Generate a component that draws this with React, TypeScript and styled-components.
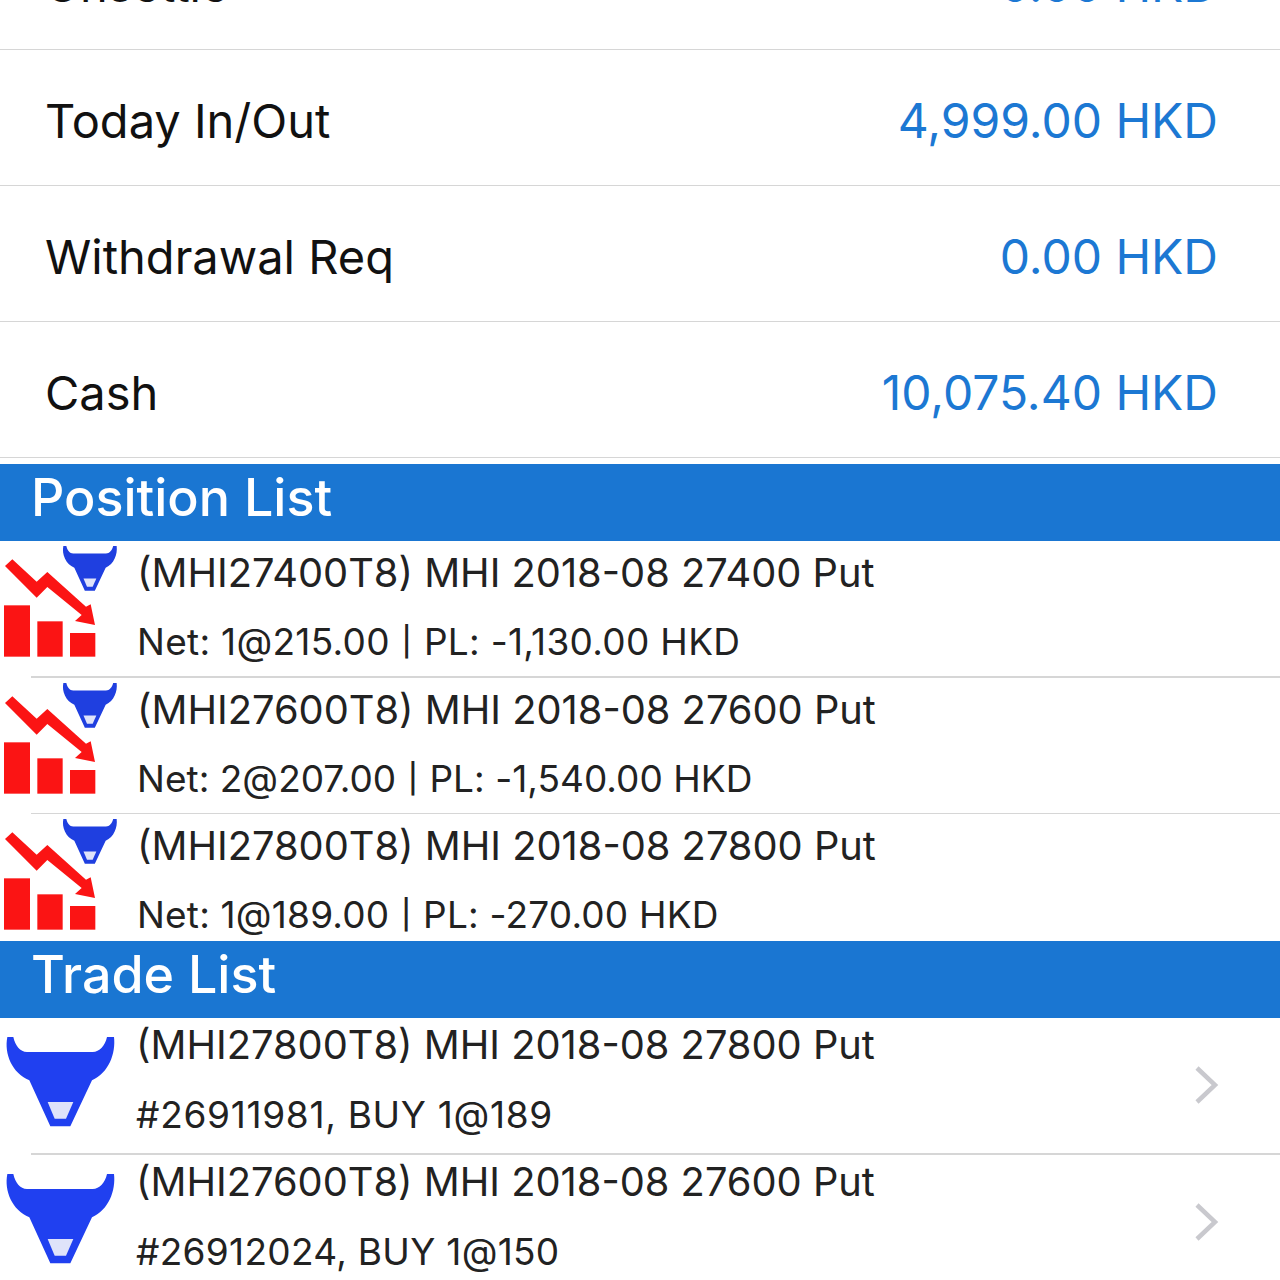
import React from 'react'
import styled, { createGlobalStyle } from 'styled-components'

const GlobalStyle = createGlobalStyle`
    html, body {
        margin: 0;
        padding: 0;
        height: 1280px;
        overflow: hidden;
        background: #fff;
        font-family: Inter, "Liberation Sans", sans-serif;
    }
`

const Screen = styled.div`
    width: 1280px;
    height: 1280px;
    overflow: hidden;
`

const Page = styled.div`
    display: flex;
    flex-direction: column;
    margin-top: -86px;
`

const SummaryRow = styled.div`
    display: flex;
    align-items: center;
    justify-content: space-between;
    box-sizing: border-box;
    height: 136px;
    padding: 5px 62px 0 45px;
    border-bottom: 1.5px solid #d6d6d6;
`

const SummaryLabel = styled.div`
    font-size: 47px;
    color: #111;
`

const SummaryValue = styled.div`
    font-size: 48px;
    color: #1c78d3;
`

const SectionHeader = styled.div`
    display: flex;
    align-items: center;
    box-sizing: border-box;
    height: 77px;
    padding: 0 0 10px 31px;
    background: #1a76d2;
    color: #fff;
    font-size: 52px;
    font-weight: 500;
`

const PositionHeader = styled(SectionHeader)`
    margin-top: 6px;
`

const ListRow = styled.div<{ $short?: boolean }>`
    display: flex;
    align-items: flex-start;
    height: ${p => (p.$short ? '127px' : '135px')};
    overflow: hidden;
`

const IconCell = styled.div`
    flex: 0 0 137px;
    display: flex;
`

const RowBody = styled.div<{ $trade?: boolean }>`
    flex: 1;
    display: flex;
    flex-direction: column;
    gap: ${p => (p.$trade ? '22px' : '21px')};
    padding-top: ${p => (p.$trade ? '3px' : '8px')};
    margin-left: ${p => (p.$trade ? '-1px' : '0')};
`

const RowTitle = styled.div`
    font-size: 39.8px;
    line-height: 48px;
    color: #222;
    white-space: nowrap;
`

const RowDetail = styled.div<{ $tracking: number }>`
    font-size: 37px;
    line-height: 48px;
    color: #222;
    white-space: nowrap;
    letter-spacing: ${p => p.$tracking}px;
`

const Pipe = styled.span`
    display: inline-block;
    transform: scaleY(0.78);
`

const Separator = styled.div`
    height: 1.5px;
    margin-left: 31px;
    background: #d6d6d6;
`

const Chevron = styled.svg`
    flex: 0 0 auto;
    width: 26px;
    height: 42px;
    margin: 46px 61px 0 0;
`

const BULL = 'M6 0 L24 0 C30 26 44 45 65 45 L262 45 C283 45 299 26 305 0 L326 0 C332 50 310 108 260 130 L195 268 L135 268 L72 130 C20 108 -4 50 6 0 Z'
const SNOUT = 'M127 195 L204 195 L182 245 L148 245 Z'

const PositionIcon = () => (
    <svg width="120" height="120" viewBox="0 0 360 360">
        <path d="M15 75 L37 55 L110 122 L142 93 L258 197 L272 190 L285 252 L225 240 L245 222 L142 138 L110 170 Z" fill="#fb1414" />
        <rect x="12" y="193" width="78" height="154" fill="#fb1414" />
        <rect x="112" y="241" width="76" height="106" fill="#fb1414" />
        <rect x="210" y="276" width="76" height="71" fill="#fb1414" />
        <g transform="translate(187 15) scale(0.5)">
            <path d={BULL} fill="#1f3fe0" />
            <path d={SNOUT} fill="#dfe3fa" />
        </g>
    </svg>
)

const TradeIcon = () => (
    <svg width="120" height="120" viewBox="0 0 360 360">
        <g transform="translate(16 57)">
            <path d={BULL} fill="#2040f0" />
            <path d={SNOUT} fill="#dfe3fa" />
        </g>
    </svg>
)

const summary = [
    { label: 'Unsettle', value: '0.00 HKD' },
    { label: 'Today In/Out', value: '4,999.00 HKD' },
    { label: 'Withdrawal Req', value: '0.00 HKD' },
    { label: 'Cash', value: '10,075.40 HKD' },
]

const positions = [
    { title: '(MHI27400T8) MHI 2018-08 27400 Put', net: 'Net: 1@215.00', pl: 'PL: -1,130.00 HKD', tracking: 0.3 },
    { title: '(MHI27600T8) MHI 2018-08 27600 Put', net: 'Net: 2@207.00', pl: 'PL: -1,540.00 HKD', tracking: 0.03 },
    { title: '(MHI27800T8) MHI 2018-08 27800 Put', net: 'Net: 1@189.00', pl: 'PL: -270.00 HKD', tracking: 0.2 },
]

const trades = [
    { title: '(MHI27800T8) MHI 2018-08 27800 Put', detail: '#26911981, BUY 1@189', tracking: 0.7 },
    { title: '(MHI27600T8) MHI 2018-08 27600 Put', detail: '#26912024, BUY 1@150', tracking: 0.3 },
]

const App = () => {
    return (
        <Screen>
            <GlobalStyle />
            <Page>
                {summary.map(row => (
                    <SummaryRow key={row.label}>
                        <SummaryLabel>{row.label}</SummaryLabel>
                        <SummaryValue>{row.value}</SummaryValue>
                    </SummaryRow>
                ))}
                <PositionHeader>Position List</PositionHeader>
                {positions.map((row, i) => (
                    <React.Fragment key={row.title}>
                        <ListRow $short={i === positions.length - 1}>
                            <IconCell><PositionIcon /></IconCell>
                            <RowBody>
                                <RowTitle>{row.title}</RowTitle>
                                <RowDetail $tracking={row.tracking}>{row.net} <Pipe>|</Pipe> {row.pl}</RowDetail>
                            </RowBody>
                        </ListRow>
                        {i < positions.length - 1 && <Separator />}
                    </React.Fragment>
                ))}
                <SectionHeader>Trade List</SectionHeader>
                {trades.map(row => (
                    <React.Fragment key={row.title}>
                        <ListRow>
                            <IconCell><TradeIcon /></IconCell>
                            <RowBody $trade>
                                <RowTitle>{row.title}</RowTitle>
                                <RowDetail $tracking={row.tracking}>{row.detail}</RowDetail>
                            </RowBody>
                            <Chevron viewBox="0 0 26 42">
                                <path d="M4 4 L22 21 L4 38" fill="none" stroke="#c9c9ce" strokeWidth="4.5" />
                            </Chevron>
                        </ListRow>
                        <Separator />
                    </React.Fragment>
                ))}
            </Page>
        </Screen>
    )
}

export default App
